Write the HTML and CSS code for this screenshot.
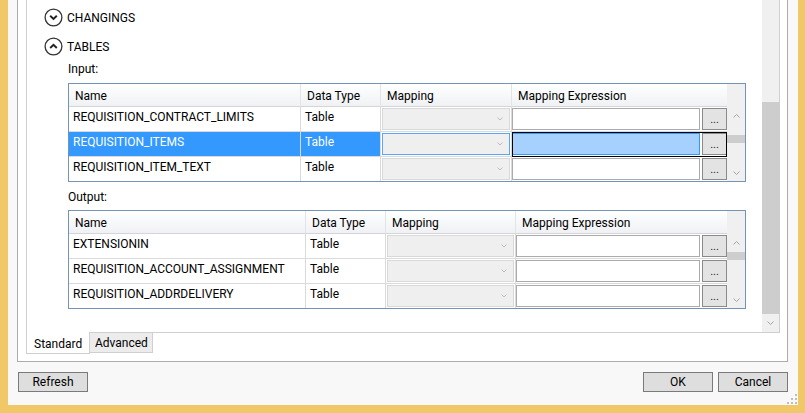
FILE: index.html
```html
<!DOCTYPE html>
<html>
<head>
<meta charset="utf-8">
<link rel="stylesheet" href="styles.css">
</head>
<body>
<div class="frame">
  <div class="dialog">
    <div class="group">
      <div class="tab-content">
        <div class="viewer">
          <div class="exp first">
            <svg class="exp-icon" viewBox="0 0 19 19"><circle cx="9.5" cy="9.5" r="8.4"/><polyline points="6.2,7.8 9.5,11 12.8,7.8"/></svg>
            <span>CHANGINGS</span>
          </div>
          <div class="exp">
            <svg class="exp-icon" viewBox="0 0 19 19"><circle cx="9.5" cy="9.5" r="8.4"/><polyline points="6.2,11 9.5,7.8 12.8,11"/></svg>
            <span>TABLES</span>
          </div>

          <div class="label">Input:</div>
          <div class="grid grid-in">
            <div class="th">Name</div>
            <div class="th">Data Type</div>
            <div class="th">Mapping</div>
            <div class="th last">Mapping Expression</div>
            <div class="vs">
              <div class="vs-head"></div>
              <div class="vs-btn up"><svg viewBox="0 0 7 4"><polyline points="0.5,3.5 3.5,0.5 6.5,3.5"/></svg></div>
              <div class="vs-track"><div class="vs-thumb thumb-in"></div></div>
              <div class="vs-btn dn"><svg viewBox="0 0 7 4"><polyline points="0.5,0.5 3.5,3.5 6.5,0.5"/></svg></div>
            </div>

            <div class="td">REQUISITION_CONTRACT_LIMITS</div>
            <div class="td">Table</div>
            <div class="td map"><div class="combo"><svg viewBox="0 0 6 4"><polyline points="0.5,0.5 3,3 5.5,0.5"/></svg></div></div>
            <div class="td expr"><div class="tb"></div><div class="dots">...</div></div>

            <div class="td sel">REQUISITION_ITEMS</div>
            <div class="td sel">Table</div>
            <div class="td map"><div class="combo focus"><svg viewBox="0 0 6 4"><polyline points="0.5,0.5 3,3 5.5,0.5"/></svg></div></div>
            <div class="td expr cur"><div class="tb sel-tb"></div><div class="dots">...</div></div>

            <div class="td end">REQUISITION_ITEM_TEXT</div>
            <div class="td end">Table</div>
            <div class="td map end"><div class="combo"><svg viewBox="0 0 6 4"><polyline points="0.5,0.5 3,3 5.5,0.5"/></svg></div></div>
            <div class="td expr end"><div class="tb"></div><div class="dots">...</div></div>
          </div>

          <div class="label out">Output:</div>
          <div class="grid grid-out">
            <div class="th">Name</div>
            <div class="th">Data Type</div>
            <div class="th">Mapping</div>
            <div class="th last">Mapping Expression</div>
            <div class="vs">
              <div class="vs-head"></div>
              <div class="vs-btn up"><svg viewBox="0 0 7 4"><polyline points="0.5,3.5 3.5,0.5 6.5,3.5"/></svg></div>
              <div class="vs-track"><div class="vs-thumb thumb-out"></div></div>
              <div class="vs-btn dn"><svg viewBox="0 0 7 4"><polyline points="0.5,0.5 3.5,3.5 6.5,0.5"/></svg></div>
            </div>

            <div class="td">EXTENSIONIN</div>
            <div class="td">Table</div>
            <div class="td map"><div class="combo"><svg viewBox="0 0 6 4"><polyline points="0.5,0.5 3,3 5.5,0.5"/></svg></div></div>
            <div class="td expr"><div class="tb"></div><div class="dots">...</div></div>

            <div class="td">REQUISITION_ACCOUNT_ASSIGNMENT</div>
            <div class="td">Table</div>
            <div class="td map"><div class="combo"><svg viewBox="0 0 6 4"><polyline points="0.5,0.5 3,3 5.5,0.5"/></svg></div></div>
            <div class="td expr"><div class="tb"></div><div class="dots">...</div></div>

            <div class="td end">REQUISITION_ADDRDELIVERY</div>
            <div class="td end">Table</div>
            <div class="td map end"><div class="combo"><svg viewBox="0 0 6 4"><polyline points="0.5,0.5 3,3 5.5,0.5"/></svg></div></div>
            <div class="td expr end"><div class="tb"></div><div class="dots">...</div></div>
          </div>
        </div>
        <div class="mainscroll">
          <div class="ms-track"></div>
          <div class="ms-thumb"></div>
          <div class="ms-btn"><svg viewBox="0 0 7 4"><polyline points="0.5,0.5 3.5,3.5 6.5,0.5"/></svg></div>
        </div>
      </div>
      <div class="tab-strip">
        <div class="tab active">Standard</div>
        <div class="tab">Advanced</div>
      </div>
    </div>
    <div class="buttons">
      <button class="btn">Refresh</button>
      <span class="spacer"></span>
      <button class="btn ok">OK</button>
      <button class="btn">Cancel</button>
    </div>
    <svg class="grip" viewBox="0 0 12 12">
      <rect x="9" y="1" width="2" height="2"/>
      <rect x="9" y="5" width="2" height="2"/>
      <rect x="5" y="5" width="2" height="2"/>
      <rect x="9" y="9" width="2" height="2"/>
      <rect x="5" y="9" width="2" height="2"/>
      <rect x="1" y="9" width="2" height="2"/>
    </svg>
  </div>
</div>
</body>
</html>
```

FILE: styles.css
```css
* { box-sizing: border-box; }
html, body { margin: 0; padding: 0; }
body {
  width: 805px;
  height: 413px;
  overflow: hidden;
  background: #f0c868;
  font-family: Roboto, "Liberation Sans", sans-serif;
  font-size: 12px;
  color: #000;
}
.frame {
  height: 413px;
  padding: 0 7px 8px 8px;
}
.dialog {
  position: relative;
  height: 405px;
  background: #f8f8f8;
}
.group {
  margin-left: 9px;
  width: 771px;
  height: 362px;
  background: #fff;
  border: 1px solid #ababab;
  border-top: none;
  padding: 0 7px 0 8px;
}
.tab-content {
  width: 754px;
  height: 333px;
  border: 1px solid #cfcfcf;
  border-top: none;
  display: flex;
  background: #fff;
}
.viewer {
  flex: 1;
  overflow: hidden;
}
.mainscroll {
  width: 17px;
  display: flex;
  flex-direction: column;
  background: #f0f0f0;
}
.ms-track { height: 102px; }
.ms-thumb { height: 212px; background: #cdcdcd; }
.ms-btn {
  height: 18px;
  display: flex;
  align-items: center;
  justify-content: center;
}
.ms-btn svg, .vs-btn svg { width: 7px; height: 4px; }
polyline { fill: none; stroke: #a3a3a3; stroke-width: 1; }

.exp {
  display: flex;
  align-items: center;
  height: 29px;
  padding-left: 17px;
  line-height: 20px;
}
.exp.first { margin-top: 3px; }
.exp-icon {
  width: 19px;
  height: 19px;
  margin-right: 4px;
}
.exp-icon circle { fill: none; stroke: #333; stroke-width: 1.3; }
.exp-icon polyline { stroke: #222; stroke-width: 1.9; }

.label {
  padding-left: 41px;
  line-height: 16px;
  height: 16px;
}
.label.out { margin-top: 7px; }

.grid {
  margin-left: 41px;
  width: 678px;
  border: 1px solid #7393b8;
  display: grid;
  grid-template-rows: 23px 25px 25px 24px;
}
.grid-in { margin-top: 6px; grid-template-columns: 232px 80px 131px 215px 18px; }
.grid-out { margin-top: 5px; grid-template-columns: 237px 80px 130px 211px 18px; }

.th {
  background: linear-gradient(#ffffff, #eff1f4);
  border-right: 1px solid #e2e4e7;
  border-bottom: 1px solid #d5d5d5;
  padding: 2px 0 0 6px;
  line-height: 20px;
  white-space: nowrap;
}
.th.last { border-right: none; }

.td {
  border-right: 1px solid #dadada;
  border-bottom: 1px solid #dadada;
  line-height: 20px;
  padding-left: 4px;
  white-space: nowrap;
  overflow: hidden;
}
.td.end { border-bottom: none; }
.td.sel { background: #3399ff; color: #fff; }
.td.map { padding: 1px 1px 1px 1px; }
.td.expr {
  display: flex;
  padding: 1px 0;
  border-right: none;
}
.td.expr.cur {
  outline: 1px solid #000;
  outline-offset: -1px;
}
.combo {
  height: 22px;
  background: #efefef;
  border: 1px solid #d9d9d9;
  display: flex;
  align-items: center;
  justify-content: flex-end;
  padding-right: 6px;
}
.combo.focus { border-color: #5aa7f7; }
.combo svg { width: 6px; height: 4px; }
.combo polyline { stroke: #bcbcbc; }
.tb {
  flex: 1;
  height: 22px;
  border: 1px solid #ababab;
  background: #fff;
}
.tb.sel-tb { background: #a6d1ff; border-color: #3399ff; }
.dots {
  width: 25px;
  height: 22px;
  margin-left: 2px;
  border: 1px solid #8a8a8a;
  background: #e3e3e3;
  font-size: 11px;
  line-height: 22px;
  text-align: center;
  color: #222;
}

.vs {
  grid-column: 5;
  grid-row: 1 / span 4;
  background: #f0f0f0;
  display: flex;
  flex-direction: column;
}
.vs-head { height: 23px; }
.vs-btn {
  height: 18px;
  display: flex;
  align-items: center;
  justify-content: center;
}
.vs-btn.dn { height: 17px; }
.vs-track { flex: 1; }
.vs-thumb { height: 8px; background: #cdcdcd; }
.thumb-in { margin-top: 10px; }
.thumb-out { margin-top: 0; }

.tab-strip {
  display: flex;
}
.tab {
  width: 64px;
  margin-top: -1px;
  border: 1px solid #cfcfcf;
  line-height: 16px;
  white-space: nowrap;
}
.tab.active {
  height: 22px;
  border-top: none;
  background: #fff;
  padding: 4px 0 0 7px;
}
.tab:not(.active) {
  height: 21px;
  margin-left: -1px;
  background: #ececec;
  padding: 2px 0 0 5px;
}

.buttons {
  display: flex;
  margin-top: 10px;
  padding: 0 10px;
}
.spacer { flex: 1; }
.btn {
  width: 70px;
  height: 20px;
  padding: 0;
  border: 1px solid #7a7a7a;
  background: #dedede;
  font-family: Roboto, "Liberation Sans", sans-serif;
  font-size: 12px;
  line-height: 18px;
  color: #000;
}
.btn.ok { margin-right: 5px; }
.grip {
  position: absolute;
  right: 0;
  bottom: 0;
  width: 12px;
  height: 12px;
  fill: #bdbdbd;
}
```
